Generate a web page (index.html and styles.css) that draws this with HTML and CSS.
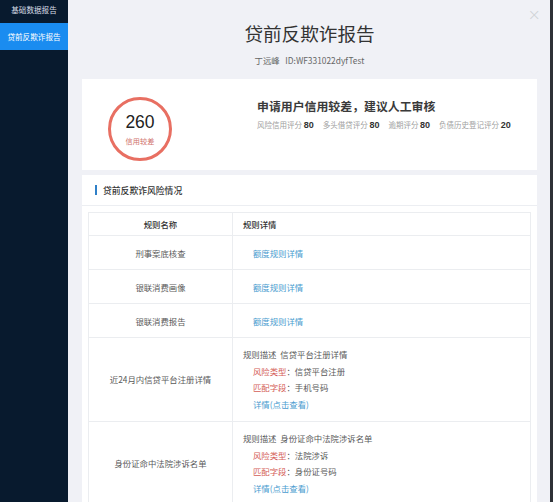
FILE: index.html
```html
<!DOCTYPE html>
<html lang="zh-CN">
<head>
<meta charset="utf-8">
<link rel="stylesheet" href="styles.css">
</head>
<body>
<div class="app">
  <aside class="sidebar">
    <div class="nav-item">基础数据报告</div>
    <div class="nav-item active">贷前反欺诈报告</div>
  </aside>
  <main class="main">
    <span class="close">×</span>
    <h1 class="title">贷前反欺诈报告</h1>
    <div class="subtitle">丁远峰&nbsp;&nbsp;&nbsp;ID:WF331022dyfTest</div>

    <section class="card summary">
      <div class="score-ring">
        <div class="score-num">260</div>
        <div class="score-label">信用较差</div>
      </div>
      <div class="summary-text">
        <div class="verdict">申请用户信用较差，建议人工审核</div>
        <div class="scores">
          <span class="score-item">风险信用评分 <b>80</b></span>
          <span class="score-item">多头借贷评分 <b>80</b></span>
          <span class="score-item">逾期评分 <b>80</b></span>
          <span class="score-item">负债历史登记评分 <b>20</b></span>
        </div>
      </div>
    </section>

    <section class="card risk">
      <div class="card-head"><span class="bar"></span>贷前反欺诈风险情况</div>
      <table class="rules">
        <thead>
          <tr><th class="c1">规则名称</th><th class="c2">规则详情</th></tr>
        </thead>
        <tbody>
          <tr class="short"><td class="c1">刑事案底核查</td><td class="c2"><span class="link indent">额度规则详情</span></td></tr>
          <tr class="short"><td class="c1">银联消费画像</td><td class="c2"><span class="link indent">额度规则详情</span></td></tr>
          <tr class="short"><td class="c1">银联消费报告</td><td class="c2"><span class="link indent">额度规则详情</span></td></tr>
          <tr class="tall">
            <td class="c1">近24月内信贷平台注册详情</td>
            <td class="c2">
              <div class="line">规则描述&nbsp;&nbsp;信贷平台注册详情</div>
              <div class="line indent"><span class="lbl">风险类型</span>：信贷平台注册</div>
              <div class="line indent"><span class="lbl">匹配字段</span>：手机号码</div>
              <div class="line indent"><span class="link">详情(点击查看)</span></div>
            </td>
          </tr>
          <tr class="tall">
            <td class="c1">身份证命中法院涉诉名单</td>
            <td class="c2">
              <div class="line">规则描述&nbsp;&nbsp;身份证命中法院涉诉名单</div>
              <div class="line indent"><span class="lbl">风险类型</span>：法院涉诉</div>
              <div class="line indent"><span class="lbl">匹配字段</span>：身份证号码</div>
              <div class="line indent"><span class="link">详情(点击查看)</span></div>
            </td>
          </tr>
        </tbody>
      </table>
    </section>
  </main>
</div>
</body>
</html>
```

FILE: styles.css
```css
* { box-sizing: border-box; }
html, body {
  margin: 0;
  padding: 0;
  height: 100%;
  overflow: hidden;
}
body {
  font-family: "Noto Sans CJK SC", "Noto Sans", "Liberation Sans", sans-serif;
  color: #555;
  background: #f0f1f6;
}
.app {
  display: flex;
  height: 502px;
}
.sidebar {
  width: 68px;
  flex: none;
  background: #081a2e;
}
.nav-item {
  height: 21px;
  line-height: 20px;
  font-size: 7.6px;
  color: #d7dde6;
  text-align: center;
  white-space: nowrap;
}
.nav-item.active {
  margin-top: 2px;
  height: 27px;
  line-height: 27px;
  background: #1a8cf0;
  color: #fff;
}
.main {
  position: relative;
  flex: 1;
  background: #f0f1f6;
  border-right: 3px solid #2e3136;
  padding: 20px 13px 0 14px;
  overflow: hidden;
}
.close {
  position: absolute;
  right: 9px;
  top: 6px;
  font-size: 16px;
  line-height: 18px;
  color: #cfd1d5;
  font-family: "DejaVu Sans", sans-serif;
  font-weight: 300;
}
.title {
  margin: 0;
  text-align: center;
  font-size: 18.6px;
  line-height: 26px;
  font-weight: 400;
  color: #333;
}
.subtitle {
  margin-top: 7px;
  text-align: center;
  font-size: 8.4px;
  line-height: 14px;
  color: #666;
}
.card {
  background: #fff;
}
.summary {
  margin-top: 12px;
  height: 91px;
  display: flex;
  align-items: flex-start;
  padding: 18px 0 0 26px;
}
.score-ring {
  width: 64px;
  height: 64px;
  border-radius: 50%;
  border: 3px solid #e86f62;
  display: flex;
  flex-direction: column;
  align-items: center;
  flex: none;
  padding-top: 12px;
}
.score-num {
  font-family: "Liberation Sans", "Noto Sans", sans-serif;
  font-size: 17.5px;
  line-height: 20px;
  color: #222;
}
.score-label {
  margin-top: 4px;
  font-size: 7.2px;
  line-height: 10px;
  color: #d0716a;
}
.summary-text {
  margin-left: 85px;
  padding-top: 1px;
}
.verdict {
  font-size: 11.9px;
  line-height: 16px;
  font-weight: 700;
  color: #3a3a3a;
  white-space: nowrap;
}
.scores {
  margin-top: 5px;
  display: flex;
  gap: 9px;
  font-size: 7.5px;
  line-height: 12px;
  color: #a0a0a0;
  white-space: nowrap;
}
.scores b {
  font-family: "Liberation Sans", sans-serif;
  font-size: 9px;
  color: #333;
}
.risk {
  margin-top: 5px;
  height: 400px;
  padding: 0 6px;
}
.card-head {
  height: 31px;
  display: flex;
  align-items: center;
  border-bottom: 1px solid #eceef2;
  margin: 0 -6px;
  padding-left: 13px;
  font-size: 8.8px;
  font-weight: 500;
  color: #333;
}
.bar {
  width: 2px;
  height: 10px;
  background: #2f80c8;
  margin-right: 6px;
}
.rules {
  margin-top: 6px;
  width: 100%;
  border-collapse: collapse;
  font-size: 8.4px;
  color: #5a5a5a;
}
.rules th, .rules td {
  border: 1px solid #ebedf0;
  padding: 0;
  vertical-align: middle;
}
.rules th {
  height: 23px;
  font-weight: 500;
  color: #333;
}
.rules .c1 {
  width: 144px;
  text-align: center;
}
.rules .c2 {
  text-align: left;
  padding-left: 10px;
}
.rules tr.short td { height: 34px; }
.rules tr.tall td { height: 83px; }
.rules tr.tall td.c2 { padding-top: 8px; padding-bottom: 8px; }
.line { line-height: 16.7px; }
.indent { margin-left: 10px; }
.link { color: #4a9ccf; }
.lbl { color: #d45d57; }
```
